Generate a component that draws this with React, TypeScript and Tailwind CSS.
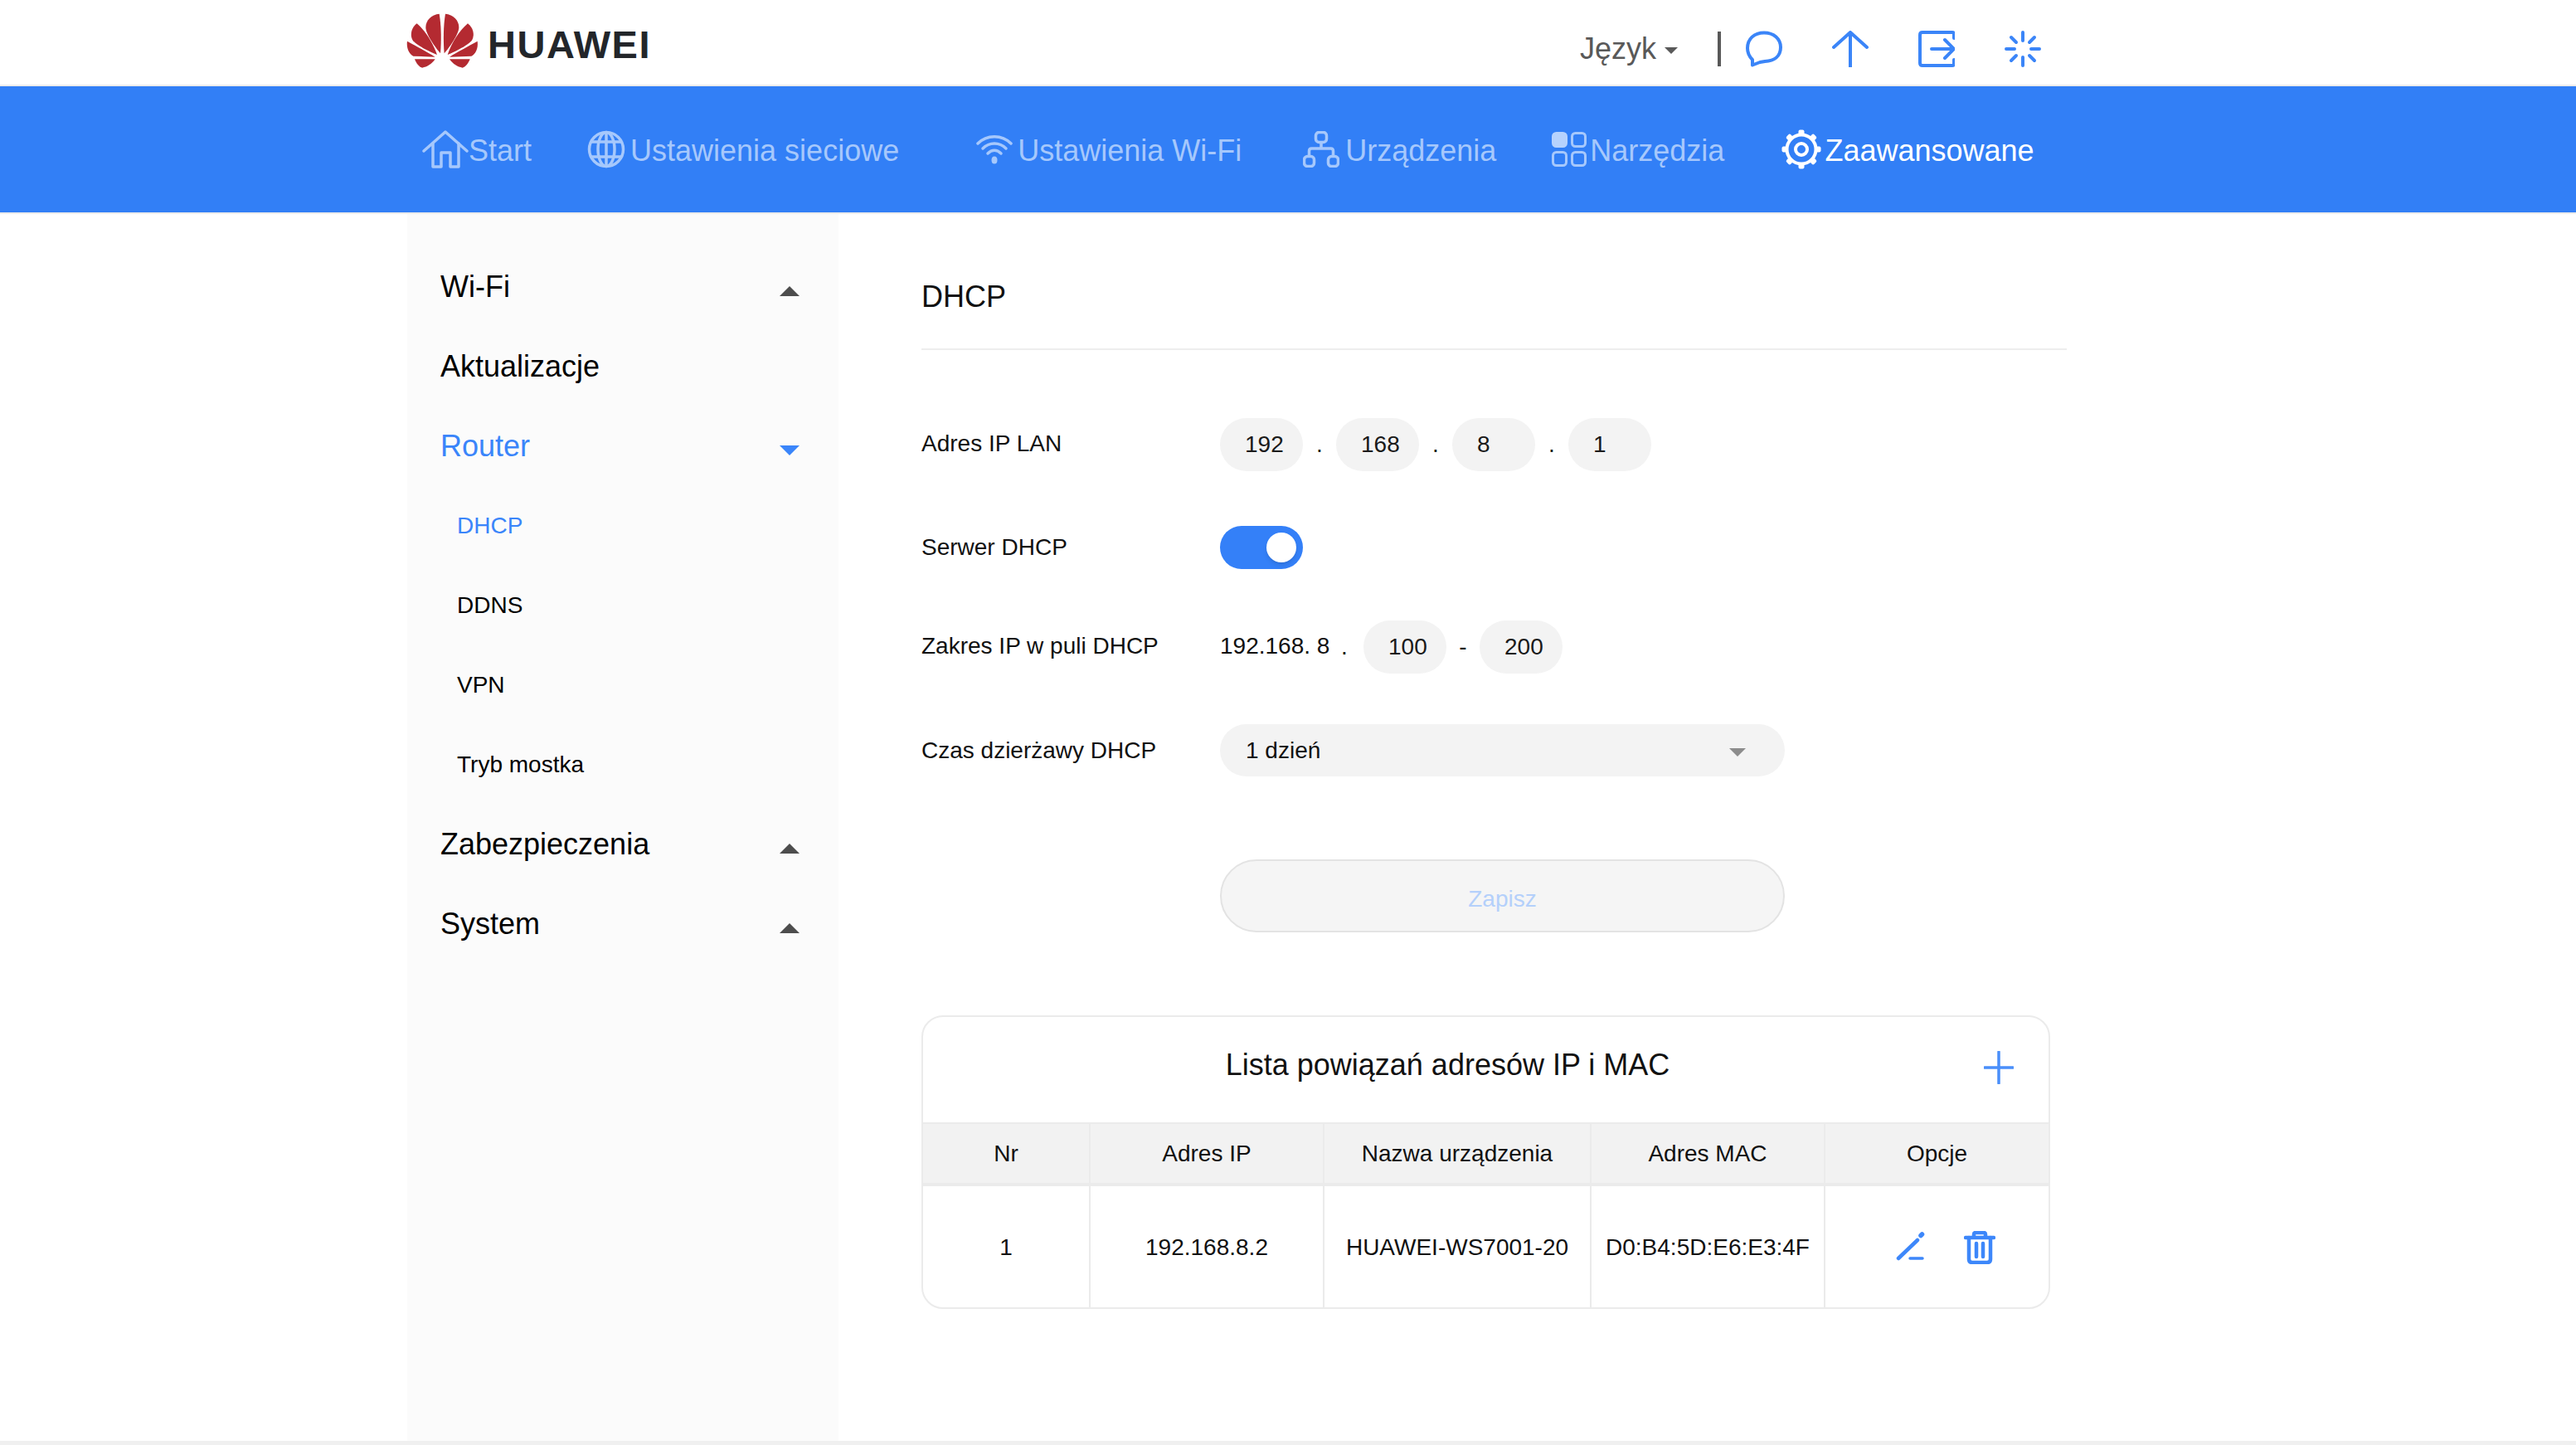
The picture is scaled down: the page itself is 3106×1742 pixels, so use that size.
import React from "react";

const FONT = "[font-family:'Liberation_Sans',Arial,sans-serif]";

function Logo() {
  const petals = (
    <>
      <path d="M134 23C106 26 85 45 85 72C85 97 122 148 138 166C142 120 141 62 134 23Z" />
      <path d="M53 58C34 72 27 98 37 117C47 135 100 160 126 171C112 130 85 85 53 58Z" />
      <path d="M18 122C14 148 26 170 40 176L119 179C90 160 50 140 18 122Z" />
      <path d="M45 187L119 187C106 205 90 215 72 218C60 215 50 200 45 187Z" />
    </>
  );
  return (
    <svg width="100" height="80" viewBox="0 0 300 240" fill="#b42a31" className="shrink-0 -ml-[6px]">
      {petals}
      <g transform="matrix(-1 0 0 1 290 0)">{petals}</g>
    </svg>
  );
}

function Bubble() {
  return (
    <svg width="44" height="44" viewBox="0 0 44 44" fill="none" stroke="#3b85f8" strokeWidth="4" strokeLinejoin="round">
      <path d="M8 35C4 31 2 27 2 21C2 10 10 2.500 22 2.500C34 2.500 42 10 42 20C42 31 34 36.500 23 37L17 38L8 41.500Z" />
    </svg>
  );
}
function ArrowUp() {
  return (
    <svg width="44" height="44" viewBox="0 0 44 44" fill="none" stroke="#3b85f8" strokeWidth="4" strokeLinecap="round" strokeLinejoin="round">
      <path d="M22 2V44M2 20L22 2L42 20" />
    </svg>
  );
}
function Exit() {
  return (
    <svg width="44" height="44" viewBox="0 0 44 44" fill="none" stroke="#3b85f8" strokeWidth="4" strokeLinecap="round" strokeLinejoin="round">
      <path d="M43 9V4Q43 2 41 2H5Q2 2 2 5V39Q2 42 5 42H41Q43 42 43 40V35" />
      <path d="M16 22H43M32 11L43 22L32 33" />
    </svg>
  );
}
function Spinner() {
  return (
    <svg width="44" height="44" viewBox="0 0 44 44" fill="none" stroke="#3b85f8" strokeWidth="4" strokeLinecap="round">
      <path d="M22 2V12M22 32V42M2 22H12M32 22H42M8 8L14 14M36 8L30 14M8 36L14 30M36 36L30 30" />
    </svg>
  );
}

const NAV = "#a6c8fc";
function Home() {
  return (
    <svg width="56" height="46" viewBox="0 0 56 46" fill="none" stroke={NAV} strokeWidth="3.500" strokeLinecap="round" strokeLinejoin="round" className="shrink-0">
      <path d="M2 25L28 2L54 25" />
      <path d="M13 16V44H23V27H34V44H44V16" />
    </svg>
  );
}
function Globe() {
  return (
    <svg width="46" height="46" viewBox="0 0 46 46" fill="none" stroke={NAV} strokeWidth="3.500" className="shrink-0">
      <circle cx="23" cy="23" r="20.500" />
      <ellipse cx="23" cy="23" rx="10" ry="20.500" />
      <path d="M23 2.500V43.500M5 14H41M5 32H41" />
    </svg>
  );
}
function Wifi() {
  return (
    <svg width="44" height="36" viewBox="0 0 44 36" fill="none" stroke={NAV} strokeWidth="3.500" strokeLinecap="round" className="shrink-0">
      <path d="M2 11C13 0 31 0 42 11" />
      <path d="M8 17C16 9 28 9 36 17" />
      <path d="M14 23C19 18 25 18 30 23" />
      <ellipse cx="22" cy="31" rx="3.500" ry="4.500" fill={NAV} stroke="none" />
    </svg>
  );
}
function Devices() {
  return (
    <svg width="44" height="44" viewBox="0 0 44 44" fill="none" stroke={NAV} strokeWidth="3.500" strokeLinejoin="round" className="shrink-0">
      <rect x="15.500" y="1.500" width="13" height="12" rx="4" />
      <rect x="1.500" y="30.500" width="12" height="12" rx="4" />
      <rect x="30.500" y="30.500" width="12" height="12" rx="4" />
      <path d="M22 13.500V21M7.500 30.500V24Q7.500 21 10.500 21H33.500Q36.500 21 36.500 24V30.500" />
    </svg>
  );
}
function Tools() {
  return (
    <svg width="42" height="42" viewBox="0 0 42 42" fill="none" stroke={NAV} strokeWidth="3" className="shrink-0">
      <rect x="1.500" y="1.500" width="16" height="16" rx="4" fill="#b6d2fd" stroke="#b6d2fd" />
      <rect x="24.500" y="1.500" width="16" height="16" rx="4" />
      <rect x="1.500" y="24.500" width="16" height="16" rx="4" />
      <rect x="24.500" y="24.500" width="16" height="16" rx="4" />
    </svg>
  );
}
function Gear() {
  const a = [0, 45, 90, 135, 180, 225, 270, 315];
  return (
    <svg width="48" height="48" viewBox="0 0 48 48" fill="none" stroke="#fff" strokeWidth="4" className="shrink-0">
      <circle cx="24" cy="24" r="17.500" />
      <circle cx="24" cy="24" r="7" />
      {a.map((d) => (
        <rect key={d} x="20.500" y="0.500" width="7" height="6" rx="2" fill="#fff" stroke="none" transform={`rotate(${d} 24 24)`} />
      ))}
    </svg>
  );
}

function Caret({ up, color, className }: { up?: boolean; color: string; className?: string }) {
  return (
    <svg width="24" height="12" viewBox="0 0 24 12" className={className}>
      <path d={up ? "M12 0L24 12H0Z" : "M0 0H24L12 12Z"} fill={color} />
    </svg>
  );
}

function Side({ label, caret, active }: { label: string; caret?: "up" | "down"; active?: boolean }) {
  return (
    <div className={`h-[96px] pl-[40px] pr-[47px] flex items-center justify-between text-[36px] ${active ? "text-[#3a85fa]" : "text-black"}`}>
      <span>{label}</span>
      {caret && <Caret up={caret === "up"} color={active ? "#3a85fa" : "#4d4d4d"} className="mt-[10px]" />}
    </div>
  );
}
function Sub({ label, active }: { label: string; active?: boolean }) {
  return (
    <div className={`h-[96px] pl-[60px] flex items-center text-[28px] ${active ? "text-[#3a85fa]" : "text-black"}`}>{label}</div>
  );
}

function Field({ v }: { v: string }) {
  return <div className="w-[100px] h-[64px] rounded-[32px] bg-[#f3f3f3] pl-[30px] flex items-center text-[28px] text-[#1a1a1a]">{v}</div>;
}
function Sep({ c }: { c: string }) {
  return <div className="w-[40px] text-center text-[28px] text-[#1a1a1a]">{c}</div>;
}
function Label({ t, flat }: { t: string; flat?: boolean }) {
  return <div className={`w-[360px] shrink-0 text-[28px] text-[#111] ${flat ? "" : "-mt-[2px]"}`}>{t}</div>;
}

function Edit() {
  return (
    <svg width="40" height="40" viewBox="0 0 40 40" fill="none" stroke="#3d87fa" strokeWidth="4.500" strokeLinecap="round">
      <path d="M3 33L26 11" />
      <path d="M30 5.500L31.500 4" strokeWidth="5.500" />
      <path d="M17 33H32" strokeWidth="3.500" />
    </svg>
  );
}
function Trash() {
  return (
    <svg width="38" height="40" viewBox="0 0 38 40" fill="none" stroke="#3d87fa" strokeWidth="4.500" strokeLinecap="round" strokeLinejoin="round">
      <path d="M2 8H36" />
      <path d="M12 7V4Q12 2 14 2H24Q26 2 26 4V7" />
      <path d="M6 8V34Q6 38 10 38H28Q32 38 32 34V8" />
      <path d="M15 15V31M23 15V31" />
    </svg>
  );
}
function Plus() {
  return (
    <svg width="36" height="40" viewBox="0 0 36 40" fill="none" stroke="#4a8ffa" strokeWidth="3.500" strokeLinecap="round">
      <path d="M18 1V39M1 20H35" />
    </svg>
  );
}

function Cell({ w, children, last }: { w: string; children: React.ReactNode; last?: boolean }) {
  return <div className={`${w} ${last ? "" : "border-r-2 border-[#ebebeb]"} h-full flex items-center justify-center text-[28px] text-[#111] whitespace-nowrap`}>{children}</div>;
}

export default function App() {
  return (
    <div className={`${FONT} w-[3106px] h-[1742px] bg-white flex flex-col overflow-hidden`}>
      <header className="h-[104px] shrink-0 border-b-2 border-[#ececec]">
        <div className="w-[2124px] mx-auto h-full flex items-center">
          <div className="flex items-center -mt-[4px]">
            <Logo />
            <span className="ml-[3px] text-[47px] leading-[47px] font-bold tracking-[1.500px] text-[#23262a] mt-[8px]">HUAWEI</span>
          </div>
          <div className="ml-auto mr-[154px] mt-[16px] flex items-center">
            <span className="text-[36px] text-[#595959]">Język</span>
            <Caret color="#595959" className="ml-[10px] mt-[4px] w-[16px] h-[8px]" />
            <div className="w-[4px] h-[42px] bg-[#595959] ml-[48px] mr-[30px]" />
            <Bubble />
            <div className="w-[60px]" />
            <ArrowUp />
            <div className="w-[60px]" />
            <Exit />
            <div className="w-[60px]" />
            <Spinner />
          </div>
        </div>
      </header>

      <nav className="h-[154px] shrink-0 bg-[#327ff6] border-b-2 border-[#ececec]">
        <div className="w-[2124px] mx-auto h-full pl-[18px] flex items-center text-[36px] text-[#a6c8fc] whitespace-nowrap">
          <div className="flex items-center"><Home /><span className="mt-[3px]">Start</span></div>
          <div className="flex items-center ml-[67px] gap-[6px]"><Globe /><span className="mt-[3px]">Ustawienia sieciowe</span></div>
          <div className="flex items-center ml-[93px] gap-[6px]"><Wifi /><span className="mt-[3px]">Ustawienia Wi-Fi</span></div>
          <div className="flex items-center ml-[74px] gap-[7px]"><Devices /><span className="mt-[3px]">Urządzenia</span></div>
          <div className="flex items-center ml-[67px] gap-[4px]"><Tools /><span className="mt-[3px]">Narzędzia</span></div>
          <div className="flex items-center ml-[69px] gap-[4px] text-white"><Gear /><span className="mt-[3px]">Zaawansowane</span></div>
        </div>
      </nav>

      <main className="flex-1 w-[2124px] mx-auto flex">
        <aside className="w-[520px] shrink-0 bg-[#fbfbfb] pt-[40px]">
          <Side label="Wi-Fi" caret="up" />
          <Side label="Aktualizacje" />
          <Side label="Router" caret="down" active />
          <Sub label="DHCP" active />
          <Sub label="DDNS" />
          <Sub label="VPN" />
          <Sub label="Tryb mostka" />
          <Side label="Zabezpieczenia" caret="up" />
          <Side label="System" caret="up" />
        </aside>

        <section className="ml-[100px] w-[1381px]">
          <div className="h-[164px] pt-[79px] border-b-2 border-[#eeeeee] text-[36px] leading-[42px] text-[#111]">DHCP</div>

          <div className="mt-[82px] flex items-center h-[64px]">
            <Label t="Adres IP LAN" />
            <Field v="192" /><Sep c="." /><Field v="168" /><Sep c="." /><Field v="8" /><Sep c="." /><Field v="1" />
          </div>

          <div className="mt-[66px] flex items-center h-[52px]">
            <Label t="Serwer DHCP" flat />
            <div className="w-[100px] h-[52px] rounded-[26px] bg-[#3480f8] flex items-center justify-end pr-[8px]">
              <div className="w-[36px] h-[36px] rounded-full bg-white shadow-md" />
            </div>
          </div>

          <div className="mt-[62px] flex items-center h-[64px]">
            <Label t="Zakres IP w puli DHCP" />
            <span className="text-[28px] text-[#111] -mt-[2px] w-[146px]">192.168. 8</span>
            <span className="text-[28px] text-[#111] w-[27px]">.</span>
            <Field v="100" /><Sep c="-" /><Field v="200" />
          </div>

          <div className="mt-[61px] flex items-center h-[63px]">
            <Label t="Czas dzierżawy DHCP" flat />
            <div className="w-[681px] h-[63px] rounded-[32px] bg-[#f3f3f3] pl-[31px] pr-[47px] flex items-center justify-between text-[28px] text-[#111]">
              <span>1 dzień</span>
              <Caret color="#8c8c8c" className="w-[20px] h-[10px] mt-[4px]" />
            </div>
          </div>

          <div className="mt-[100px] ml-[360px] w-[681px] h-[88px] rounded-[44px] bg-[#f5f5f5] border-2 border-[#e3e3e3] flex items-center justify-center text-[28px] text-[#b4d0fb]">
            <span className="mt-[8px]">Zapisz</span>
          </div>

          <div className="mt-[100px] w-[1361px] h-[354px] rounded-[26px] border-2 border-[#ebebeb] overflow-hidden">
            <div className="h-[127px] relative flex items-center justify-center pr-[92px] text-[36px] text-[#111]">
              <span className="-mt-[12px]">Lista powiązań adresów IP i MAC</span>
              <div className="absolute right-[42px] top-[41px] flex"><Plus /></div>
            </div>
            <div className="h-[77px] flex bg-[#f2f2f2] border-t-2 border-b-4 border-[#ebebeb]">
              <Cell w="w-[202px]">Nr</Cell>
              <Cell w="w-[282px]">Adres IP</Cell>
              <Cell w="w-[322px]">Nazwa urządzenia</Cell>
              <Cell w="w-[282px]">Adres MAC</Cell>
              <Cell w="flex-1" last>Opcje</Cell>
            </div>
            <div className="h-[146px] flex">
              <Cell w="w-[202px]"><span className="mt-[2px]">1</span></Cell>
              <Cell w="w-[282px]"><span className="mt-[2px]">192.168.8.2</span></Cell>
              <Cell w="w-[322px]"><span className="mt-[2px]">HUAWEI-WS7001-20</span></Cell>
              <Cell w="w-[282px]"><span className="mt-[2px]">D0:B4:5D:E6:E3:4F</span></Cell>
              <Cell w="flex-1" last>
                <div className="flex items-center gap-[42px] ml-[20px] mt-[2px]"><Edit /><Trash /></div>
              </Cell>
            </div>
          </div>
        </section>
      </main>

      <footer className="h-[5px] shrink-0 bg-[#f0f0f0]" />
    </div>
  );
}
